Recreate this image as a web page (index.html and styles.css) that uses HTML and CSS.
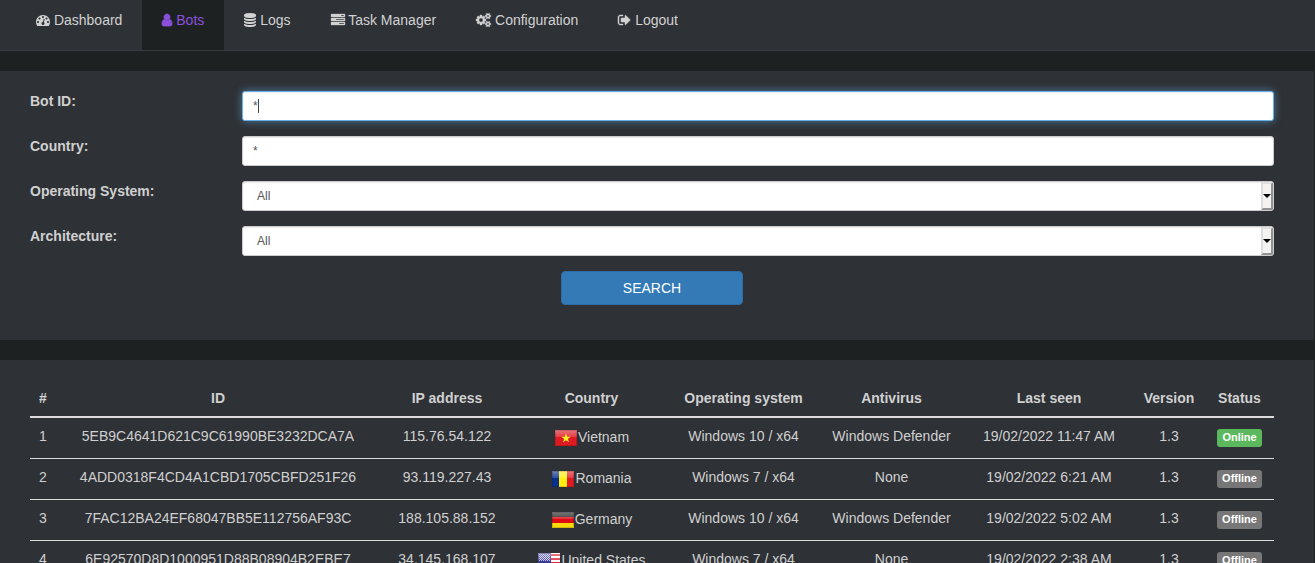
FILE: index.html
```html
<!DOCTYPE html>
<html lang="en">
<head>
<meta charset="utf-8">
<title>Bots</title>
<link rel="stylesheet" href="styles.css">
</head>
<body>
<nav class="navbar">
  <ul class="nav">
    <li><a class="nav-link" href="#dashboard"><svg class="icon" viewBox="0 0 1792 1792" aria-hidden="true"><path d="M384 1152q0-53-37.500-90.500t-90.500-37.500-90.500 37.500-37.500 90.500 37.500 90.500 90.500 37.500 90.500-37.500 37.500-90.500zm192-448q0-53-37.500-90.500t-90.500-37.500-90.500 37.500-37.500 90.500 37.500 90.500 90.500 37.500 90.500-37.500 37.500-90.500zm428 481l101-382q6-26-7.500-48.500t-38.500-29.500-48 6.500-30 39.500l-101 382q-60 5-107 43.500t-63 98.500q-20 77 20 146t117 89 146-20 89-117q16-60-6-117t-72-91zm660-33q0-53-37.500-90.500t-90.500-37.500-90.500 37.500-37.500 90.500 37.500 90.500 90.500 37.500 90.500-37.500 37.500-90.500zm-640-640q0-53-37.500-90.500t-90.500-37.500-90.500 37.500-37.500 90.500 37.500 90.500 90.500 37.500 90.500-37.500 37.500-90.500zm448 192q0-53-37.500-90.500t-90.500-37.500-90.500 37.500-37.500 90.500 37.500 90.500 90.500 37.500 90.500-37.500 37.500-90.500zm320 448q0 261-141 483-19 29-54 29h-1402q-35 0-54-29-141-221-141-483 0-182 71-348t191-286 286-191 348-71 348 71 286 191 191 286 71 348z"/></svg> Dashboard</a></li>
    <li><a class="nav-link active" href="#bots" aria-current="page"><svg class="icon icon-user" viewBox="256 0 1280 1792" aria-hidden="true"><path d="M1536 1399q0 109-62.500 187t-150.500 78h-854q-88 0-150.500-78t-62.500-187q0-85 8.500-160.500t31.500-152 58.500-131 94-89 134.500-34.500q131 128 313 128t313-128q76 0 134.500 34.500t94 89 58.500 131 31.500 152 8.500 160.500zm-256-887q0 159-112.500 271.500t-271.500 112.500-271.500-112.500-112.500-271.500 112.500-271.500 271.500-112.500 271.500 112.500 112.500 271.500z"/></svg> Bots</a></li>
    <li><a class="nav-link" href="#logs"><svg class="icon icon-database" viewBox="128 0 1536 1792" aria-hidden="true"><path d="M896 768q237 0 443-43t325-127v170q0 69-103 128t-280 93.500-385 34.500-385-34.500-280-93.500-103-128v-170q119 84 325 127t443 43zm0 768q237 0 443-43t325-127v170q0 69-103 128t-280 93.500-385 34.500-385-34.500-280-93.500-103-128v-170q119 84 325 127t443 43zm0-384q237 0 443-43t325-127v170q0 69-103 128t-280 93.500-385 34.500-385-34.500-280-93.500-103-128v-170q119 84 325 127t443 43zm0-1152q208 0 385 34.500t280 93.500 103 128v128q0 69-103 128t-280 93.500-385 34.500-385-34.500-280-93.500-103-128v-128q0-69 103-128t280-93.500 385-34.500z"/></svg> Logs</a></li>
    <li><a class="nav-link" href="#tasks"><svg class="icon icon-tasks" viewBox="0 0 1792 1792" aria-hidden="true"><path d="M1024 1408h640v-128h-640v128zm-384-512h1024v-128h-1024v128zm640-512h384v-128h-384v128zm512 832v256q0 26-19 45t-45 19h-1664q-26 0-45-19t-19-45v-256q0-26 19-45t45-19h1664q26 0 45 19t19 45zm0-512v256q0 26-19 45t-45 19h-1664q-26 0-45-19t-19-45v-256q0-26 19-45t45-19h1664q26 0 45 19t19 45zm0-512v256q0 26-19 45t-45 19h-1664q-26 0-45-19t-19-45v-256q0-26 19-45t45-19h1664q26 0 45 19t19 45z"/></svg> Task Manager</a></li>
    <li><a class="nav-link" href="#configuration"><svg class="icon icon-cogs" viewBox="0 0 1920 1792" aria-hidden="true"><path d="M896 896q0-106-75-181t-181-75-181 75-75 181 75 181 181 75 181-75 75-181zm768 512q0-52-38-90t-90-38-90 38-38 90q0 53 37.500 90.500t90.500 37.500 90.500-37.500 37.500-90.500zm0-1024q0-52-38-90t-90-38-90 38-38 90q0 53 37.500 90.500t90.500 37.500 90.500-37.500 37.500-90.500zm-384 421v185q0 10-7 19.500t-16 10.500l-155 24q-11 35-32 76 34 48 90 115 7 11 7 20 0 12-7 19-23 30-82.500 89.500t-78.500 59.500q-11 0-21-7l-115-90q-37 19-77 31-11 108-23 155-7 24-30 24h-186q-11 0-20-7.500t-10-17.500l-23-153q-34-10-75-31l-118 89q-7 7-20 7-11 0-21-8-144-133-144-160 0-9 7-19 10-14 41-53t47-61q-23-44-35-82l-152-24q-10-1-17-9.500t-7-19.500v-185q0-10 7-19.500t16-10.500l155-24q11-35 32-76-34-48-90-115-7-11-7-20 0-12 7-20 22-30 82-89t79-59q11 0 21 7l115 90q34-18 77-32 11-108 23-154 7-24 30-24h186q11 0 20 7.500t10 17.500l23 153q34 10 75 31l118-89q8-7 20-7 11 0 21 8 144 133 144 160 0 8-7 19-12 16-42 54t-45 60q23 48 34 82l152 23q10 2 17 10.500t7 19.500zm640 533v140q0 16-149 31-12 27-30 52 51 113 51 138 0 4-4 7-122 71-124 71-8 0-46-47t-52-68q-20 2-30 2t-30-2q-14 21-52 68t-46 47q-2 0-124-71-4-3-4-7 0-25 51-138-18-25-30-52-149-15-149-31v-140q0-16 149-31 13-29 30-52-51-113-51-138 0-4 4-7 4-2 35-20t59-34 30-16q8 0 46 46.500t52 67.500q20-2 30-2t30 2q51-71 92-112l6-2q4 0 124 70 4 3 4 7 0 25-51 138 17 23 30 52 149 15 149 31zm0-1024v140q0 16-149 31-12 27-30 52 51 113 51 138 0 4-4 7-122 71-124 71-8 0-46-47t-52-68q-20 2-30 2t-30-2q-14 21-52 68t-46 47q-2 0-124-71-4-3-4-7 0-25 51-138-18-25-30-52-149-15-149-31v-140q0-16 149-31 13-29 30-52-51-113-51-138 0-4 4-7 4-2 35-20t59-34 30-16q8 0 46 46.500t52 67.500q20-2 30-2t30 2q51-71 92-112l6-2q4 0 124 70 4 3 4 7 0 25-51 138 17 23 30 52 149 15 149 31z"/></svg> Configuration</a></li>
    <li><a class="nav-link" href="#logout"><svg class="icon icon-logout" viewBox="64 0 1664 1792" aria-hidden="true"><path d="M704 1440q0 4 1 20t.5 26.500-3 23.500-10 19.500-20.500 6.500h-320q-119 0-203.500-84.500t-84.500-203.500v-704q0-119 84.500-203.500t203.500-84.500h320q13 0 22.500 9.500t9.500 22.500q0 4 1 20t.5 26.500-3 23.500-10 19.500-20.500 6.500h-320q-66 0-113 47t-47 113v704q0 66 47 113t113 47h312l11.500 1 11.500 3 8 5.500 7 9 2 13.500zm928-544q0 26-19 45l-544 544q-19 19-45 19t-45-19-19-45v-288h-448q-26 0-45-19t-19-45v-384q0-26 19-45t45-19h448v-288q0-26 19-45t45-19 45 19l544 544q19 19 19 45z"/></svg> Logout</a></li>
  </ul>
</nav>

<main class="content">
  <form class="panel search-form">
    <div class="field">
      <label for="bot-id">Bot ID:</label>
      <div class="control"><input class="input focused" id="bot-id" type="text" value="*"><span class="caret" aria-hidden="true"></span></div>
    </div>
    <div class="field">
      <label for="country">Country:</label>
      <input class="input" id="country" type="text" value="*">
    </div>
    <div class="field">
      <label for="os">Operating System:</label>
      <div class="control"><select class="input select" id="os"><option>All</option></select><span class="drop" aria-hidden="true"></span></div>
    </div>
    <div class="field">
      <label for="arch">Architecture:</label>
      <div class="control"><select class="input select" id="arch"><option>All</option></select><span class="drop" aria-hidden="true"></span></div>
    </div>
    <button class="search-button" type="button">SEARCH</button>
  </form>

  <section class="panel results">
    <table class="bots">
      <colgroup>
        <col class="col-num"><col class="col-id"><col class="col-ip"><col class="col-country"><col class="col-os"><col class="col-av"><col class="col-seen"><col class="col-version"><col class="col-status">
      </colgroup>
      <thead>
        <tr><th>#</th><th>ID</th><th>IP address</th><th>Country</th><th>Operating system</th><th>Antivirus</th><th>Last seen</th><th>Version</th><th>Status</th></tr>
      </thead>
      <tbody>
        <tr>
          <td>1</td><td>5EB9C4641D621C9C61990BE3232DCA7A</td><td>115.76.54.122</td>
          <td><svg class="flag" viewBox="0 0 24 24" aria-hidden="true">
            <defs><linearGradient id="gloss" x1="0" y1="0" x2="0" y2="1"><stop offset="0" stop-color="#fff" stop-opacity=".4"/><stop offset="1" stop-color="#fff" stop-opacity=".15"/></linearGradient></defs>
            <path fill="#de1a22" d="M1 4h22v16H1z"/><path fill="url(#gloss)" d="M1 4h22v7H1z"/><path fill="#ffee20" d="M12 7.500l1.200 3.200h3.500l-2.800 2.200 1.100 3.400-3-2-3 2 1.100-3.400-2.800-2.200h3.500z"/><path class="flag-edge" d="M1.500 4.500h21v15h-21z"/></svg>Vietnam</td>
          <td>Windows 10 / x64</td><td>Windows Defender</td><td>19/02/2022 11:47 AM</td><td>1.3</td><td><span class="badge online">Online</span></td>
        </tr>
        <tr>
          <td>2</td><td>4ADD0318F4CD4A1CBD1705CBFD251F26</td><td>93.119.227.43</td>
          <td><svg class="flag" viewBox="0 0 24 24" aria-hidden="true"><path fill="#0b2f8c" d="M1 4h7v16H1z"/><path fill="#ffee10" d="M8 4h8v16H8z"/><path fill="#de1a22" d="M16 4h7v16h-7z"/><path fill="url(#gloss)" d="M1 4h22v7H1z"/><path class="flag-edge" d="M1.500 4.500h21v15h-21z"/></svg>Romania</td>
          <td>Windows 7 / x64</td><td>None</td><td>19/02/2022 6:21 AM</td><td>1.3</td><td><span class="badge">Offline</span></td>
        </tr>
        <tr>
          <td>3</td><td>7FAC12BA24EF68047BB5E112756AF93C</td><td>188.105.88.152</td>
          <td><svg class="flag" viewBox="0 0 24 24" aria-hidden="true"><path fill="#222" d="M1 4h22v5H1z"/><path fill="#e00a12" d="M1 9h22v6H1z"/><path fill="#f7d90c" d="M1 15h22v5H1z"/><path fill="url(#gloss)" d="M1 4h22v7H1z"/><path class="flag-edge" d="M1.500 4.500h21v15h-21z"/></svg>Germany</td>
          <td>Windows 10 / x64</td><td>Windows Defender</td><td>19/02/2022 5:02 AM</td><td>1.3</td><td><span class="badge">Offline</span></td>
        </tr>
        <tr>
          <td>4</td><td>6E92570D8D1000951D88B08904B2EBE7</td><td>34.145.168.107</td>
          <td><svg class="flag" viewBox="0 0 24 24" aria-hidden="true"><path fill="#fff" d="M1 4h22v16H1z"/><path fill="#e02a3c" d="M1 5h22v2H1zM1 9h22v2H1zM1 13h22v2H1zM1 17h22v2H1z"/><path fill="#3a3c98" d="M1 4h13v10H1z"/><path stroke="#c8c8ea" stroke-dasharray="1 1" d="M2 5.500h11M3 6.500h10M2 7.500h11M3 8.500h10M2 9.500h11M3 10.500h10M2 11.500h11"/><path fill="url(#gloss)" d="M1 4h22v7H1z"/></svg>United States</td>
          <td>Windows 7 / x64</td><td>None</td><td>19/02/2022 2:38 AM</td><td>1.3</td><td><span class="badge">Offline</span></td>
        </tr>
      </tbody>
    </table>
  </section>
</main>
</body>
</html>
```
FILE: styles.css
```css
* {
  box-sizing: border-box;
}

html {
  overflow: hidden;
}

body {
  margin: 0;
  background: #1e2121;
  color: #d0d0d0;
  font: 14px/20px "Liberation Sans", Arial, sans-serif;
}

.navbar {
  background: #2e3136;
  border-bottom: 1px solid #383b40;
}

.nav {
  display: flex;
  margin: 0;
  padding: 0 16px;
  list-style: none;
}

.nav-link {
  display: block;
  padding: 10px 20px 20px;
  color: #d2d2d2;
  text-decoration: none;
  white-space: nowrap;
}

.nav-link.active {
  background: #1e2121;
  color: #8a50dc;
}

.icon {
  width: 14px;
  height: 14px;
  overflow: visible;
  fill: currentColor;
  vertical-align: -2px;
}

.icon-user {
  width: 10px;
  stroke: currentColor;
  stroke-width: 100px;
}

.icon-database {
  width: 12px;
}

.icon-tasks {
  width: 14px;
  stroke: currentColor;
  stroke-width: 40px;
}

.icon-cogs {
  width: 15px;
  stroke: currentColor;
  stroke-width: 50px;
}

.icon-logout {
  width: 13px;
  stroke: currentColor;
  stroke-width: 60px;
}

.content {
  display: flex;
  flex-direction: column;
  gap: 20px;
  padding: 20px 1px 0 0;
}

.panel {
  background: #2e3136;
  padding: 20px 40px 35px 30px;
}

.search-form {
  display: flex;
  flex-direction: column;
  gap: 15px;
}

.field {
  display: grid;
  grid-template-columns: 212px 1fr;
  height: 30px;
}

.field label {
  font-weight: bold;
}

.control {
  position: relative;
}

.input {
  display: block;
  width: 100%;
  height: 30px;
  padding: 5px 10px;
  border: 1px solid #ccc;
  border-radius: 3px;
  background: #fff;
  box-shadow: inset 0 1px 1px rgba(0, 0, 0, 0.08);
  color: #555;
  font: 12px/18px "Liberation Sans", Arial, sans-serif;
  outline: none;
}

.focused {
  border-color: #66afe9;
  box-shadow: inset 0 1px 1px rgba(0, 0, 0, 0.08), 0 0 8px rgba(102, 175, 233, 0.6);
}

.select {
  appearance: none;
  padding-left: 14px;
}

.caret {
  position: absolute;
  top: 8px;
  left: 16px;
  width: 1px;
  height: 14px;
  background: #444;
}

.drop {
  position: absolute;
  top: 1px;
  right: 1px;
  bottom: 1px;
  width: 12px;
  border: 2px solid;
  border-color: #dedede #929292 #929292 #dedede;
  border-radius: 0 2px 2px 0;
  background: #f5f3f2;
  pointer-events: none;
}

.drop::after {
  content: "";
  position: absolute;
  top: 10px;
  left: 0;
  border: 4px solid transparent;
  border-top-color: #000;
  border-bottom: 0;
}

.search-button {
  align-self: center;
  width: 182px;
  height: 34px;
  border: 1px solid #2e6da4;
  border-radius: 4px;
  background: #337ab7;
  color: #fff;
  font: 14px/20px "Liberation Sans", Arial, sans-serif;
}

.bots {
  width: 100%;
  table-layout: fixed;
  border-spacing: 0;
  text-align: center;
}

.bots th,
.bots td {
  padding: 8px 0;
  vertical-align: top;
  white-space: nowrap;
}

.bots th {
  border-bottom: 2px solid #ddd;
}

.bots tr + tr td {
  border-top: 1px solid #ddd;
}

.col-num { width: 26px; }
.col-id { width: 324px; }
.col-ip { width: 134px; }
.col-country { width: 155px; }
.col-os { width: 149px; }
.col-av { width: 147px; }
.col-seen { width: 168px; }
.col-version { width: 72px; }
.col-status { width: 69px; }

.flag {
  width: 24px;
  height: 24px;
  vertical-align: middle;
}

.flag-edge {
  fill: none;
  stroke: #000;
  stroke-opacity: 0.15;
}

.badge {
  display: inline-block;
  margin-top: 3px;
  padding: 0 5px 2px;
  border-radius: 3px;
  background: #777;
  color: #fff;
  font-size: 11px;
  font-weight: bold;
  line-height: 16px;
  vertical-align: top;
}

.badge.online {
  background: #5cb85c;
}
```
